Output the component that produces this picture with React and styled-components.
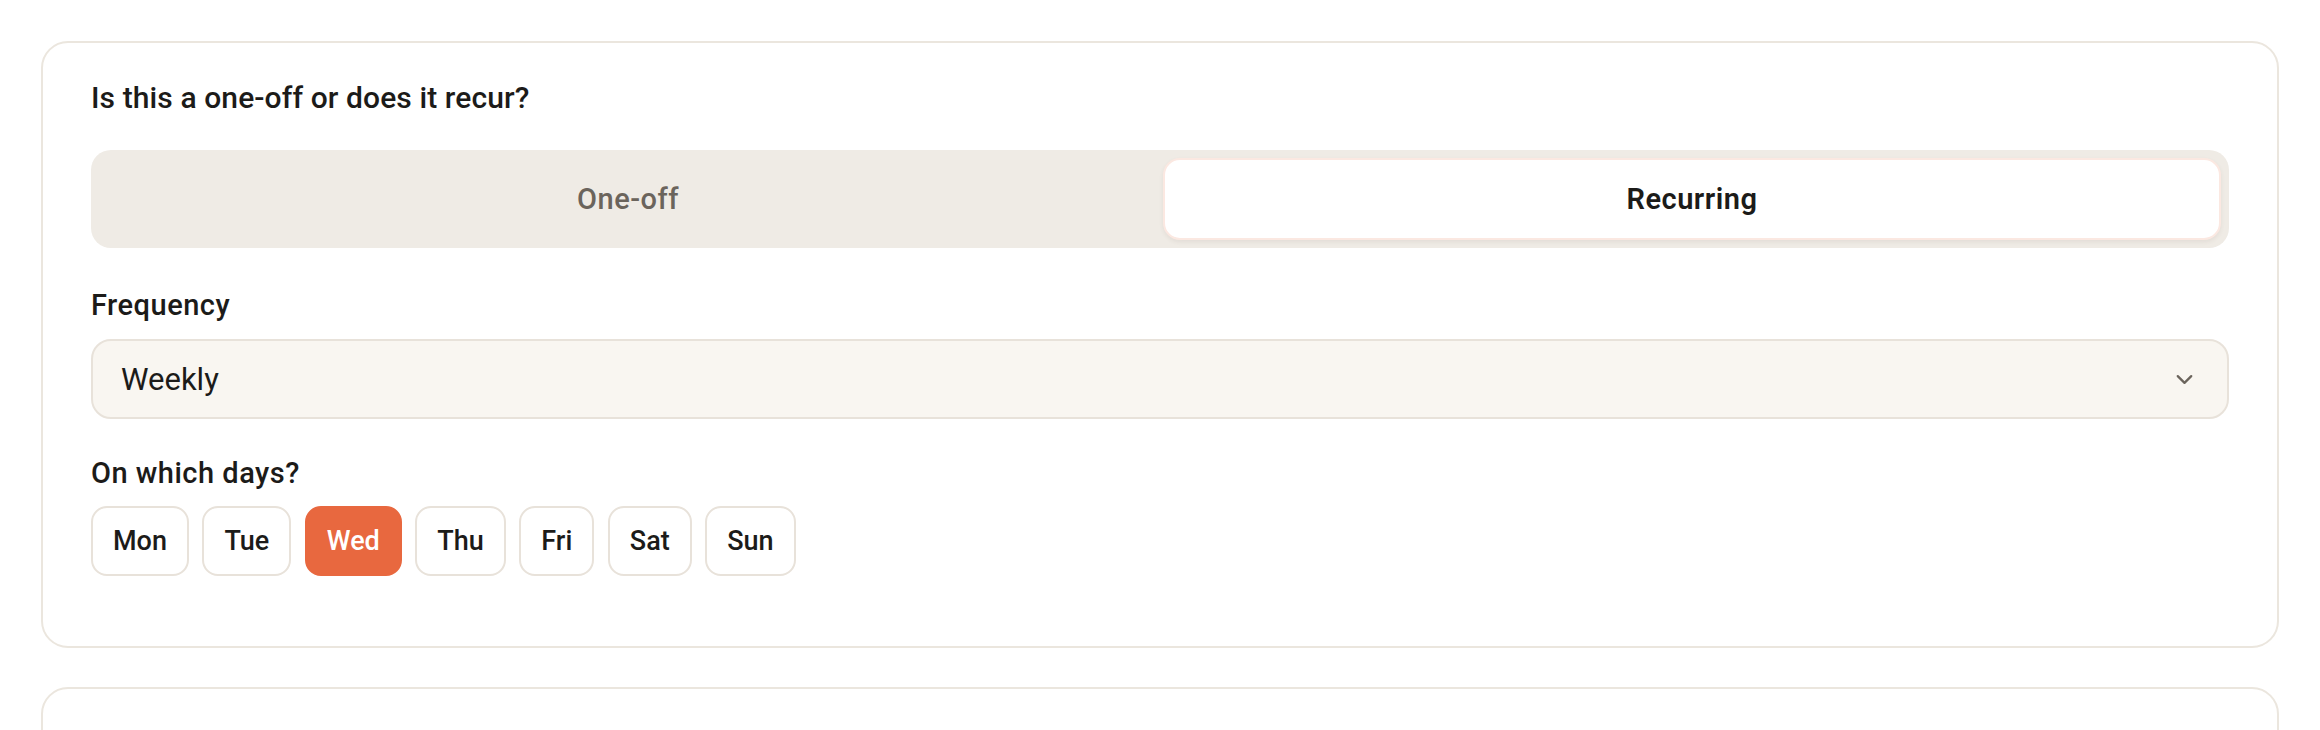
import React from "react";
import styled, { createGlobalStyle } from "styled-components";

const Global = createGlobalStyle`
  html, body { margin: 0; padding: 0; background: #ffffff; }
  body { font-family: Roboto, "Noto Sans", sans-serif; color: #1c1b19; -webkit-font-smoothing: antialiased; }
  * { box-sizing: border-box; }
`;

const Page = styled.div`
  display: flex;
  flex-direction: column;
  gap: 39px;
  padding: 41px 41px 0;
  height: 730px;
  overflow: hidden;
`;

const Card = styled.section`
  border: 2px solid #ebe6de;
  border-radius: 27px;
  background: #fff;
  padding: 37px 48px 70px;
  display: flex;
  flex-direction: column;
  flex-shrink: 0;
  min-height: ${(p) => (p.$empty ? "300px" : "auto")};
`;

const Title = styled.h2`
  margin: 0;
  font-size: 30px;
  line-height: 36px;
  font-weight: 500;
  letter-spacing: 0.1px;
  color: #1c1b19;
`;

const Segmented = styled.div`
  margin-top: 34px;
  display: grid;
  grid-template-columns: 1fr 1fr;
  gap: 6px;
  padding: 8px;
  background: #efebe5;
  border-radius: 20px;
`;

const SegButton = styled.button`
  height: 82px;
  border-radius: 17px;
  border: 2px solid ${(p) => (p.$active ? "#fbe8e1" : "transparent")};
  background: ${(p) => (p.$active ? "#ffffff" : "transparent")};
  box-shadow: ${(p) => (p.$active ? "0 2px 4px rgba(90, 70, 50, 0.08)" : "none")};
  font-family: inherit;
  font-size: 29px;
  letter-spacing: 0.5px;
  font-weight: ${(p) => (p.$active ? 600 : 500)};
  color: ${(p) => (p.$active ? "#1c1b19" : "#6b645c")};
  cursor: pointer;
`;

const Label = styled.div`
  margin-top: ${(p) => p.$mt}px;
  font-size: 29px;
  line-height: 32px;
  font-weight: 500;
  letter-spacing: 0.5px;
  color: #1c1b19;
`;

const Select = styled.div`
  margin-top: 18px;
  height: 80px;
  border: 2px solid #e8e2da;
  border-radius: 20px;
  background: #f9f6f1;
  padding: 0 29px 0 28px;
  display: flex;
  align-items: center;
  justify-content: space-between;
  font-size: 31px;
  font-weight: 400;
  color: #1c1b19;
`;

const Chevron = styled.svg`
  width: 27px;
  height: 27px;
  color: #6b645c;
`;

const Days = styled.div`
  margin-top: 17px;
  display: flex;
  gap: 13.5px;
`;

const Day = styled.button`
  height: 70px;
  padding: 0 20px;
  border-radius: 16px;
  border: 2px solid ${(p) => (p.$active ? "#e8683f" : "#e8e2da")};
  background: ${(p) => (p.$active ? "#e8683f" : "#ffffff")};
  color: ${(p) => (p.$active ? "#ffffff" : "#1c1b19")};
  font-family: inherit;
  font-size: 27px;
  font-weight: 500;
  cursor: pointer;
`;

const days = ["Mon", "Tue", "Wed", "Thu", "Fri", "Sat", "Sun"];
const selected = "Wed";

export default function App() {
  return (
    <>
      <Global />
      <Page>
        <Card>
          <Title>Is this a one-off or does it recur?</Title>
          <Segmented>
            <SegButton>One-off</SegButton>
            <SegButton $active>Recurring</SegButton>
          </Segmented>
          <Label $mt={41}>Frequency</Label>
          <Select>
            <span>Weekly</span>
            <Chevron viewBox="0 0 24 24" fill="none" stroke="currentColor" strokeWidth="2" strokeLinecap="round" strokeLinejoin="round">
              <path d="m6 9 6 6 6-6" />
            </Chevron>
          </Select>
          <Label $mt={38}>On which days?</Label>
          <Days>
            {days.map((d) => (
              <Day key={d} $active={d === selected}>
                {d}
              </Day>
            ))}
          </Days>
        </Card>
        <Card $empty />
      </Page>
    </>
  );
}
